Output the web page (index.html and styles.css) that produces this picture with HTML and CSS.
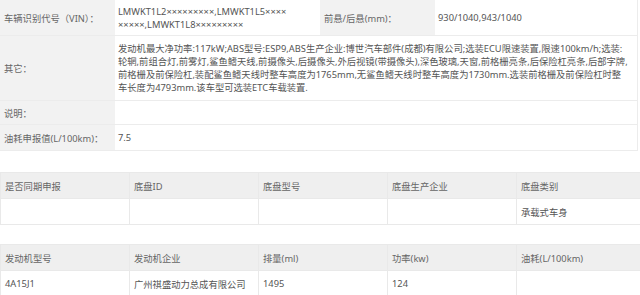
FILE: index.html
```html
<!DOCTYPE html>
<html lang="zh-CN">
<head>
<meta charset="utf-8">
<link rel="stylesheet" href="styles.css">
</head>
<body>
<table class="info">
  <tr class="r-vin">
    <td class="lbl">车辆识别代号（VIN）：</td>
    <td class="val vin">LMWKT1L2×××××××××,LMWKT1L5××××<br>×××××,LMWKT1L8×××××××××</td>
    <td class="lbl">前悬/后悬(mm)：</td>
    <td class="val">930/1040,943/1040</td>
  </tr>
  <tr class="r-other">
    <td class="lbl">其它：</td>
    <td class="val multi" colspan="3">发动机最大净功率:117kW;ABS型号:ESP9,ABS生产企业:博世汽车部件(成都)有限公司;选装ECU限速装置,限速100km/h;选装:<br>轮辋,前组合灯,前雾灯,鲨鱼鳍天线,前摄像头,后摄像头,外后视镜(带摄像头),深色玻璃,天窗,前格栅亮条,后保险杠亮条,后部字牌,<br>前格栅及前保险杠,装配鲨鱼鳍天线时整车高度为1765mm,无鲨鱼鳍天线时整车高度为1730mm.选装前格栅及前保险杠时整<br>车长度为4793mm.该车型可选装ETC车载装置.</td>
  </tr>
  <tr class="r-note">
    <td class="lbl">说明：</td>
    <td class="val" colspan="3"></td>
  </tr>
  <tr class="r-fuel">
    <td class="lbl">油耗申报值(L/100km)：</td>
    <td class="val" colspan="3">7.5</td>
  </tr>
</table>

<table class="grid chassis">
  <tr class="head">
    <td>是否同期申报</td>
    <td>底盘ID</td>
    <td>底盘型号</td>
    <td>底盘生产企业</td>
    <td>底盘类别</td>
  </tr>
  <tr class="body">
    <td></td>
    <td></td>
    <td></td>
    <td></td>
    <td>承载式车身</td>
  </tr>
</table>

<table class="grid engine">
  <tr class="head">
    <td>发动机型号</td>
    <td>发动机企业</td>
    <td>排量(ml)</td>
    <td>功率(kw)</td>
    <td>油耗(L/100km)</td>
  </tr>
  <tr class="body">
    <td>4A15J1</td>
    <td>广州祺盛动力总成有限公司</td>
    <td>1495</td>
    <td>124</td>
    <td></td>
  </tr>
</table>
</body>
</html>
```

FILE: styles.css
```css
html, body {
  margin: 0;
  padding: 0;
  background: #fff;
}
body {
  width: 640px;
  height: 295px;
  overflow: hidden;
  font-family: "Noto Sans", "Noto Sans CJK SC", sans-serif;
  font-size: 9.3px;
  color: #555;
}
table {
  border-collapse: collapse;
  width: 638px;
  table-layout: fixed;
}
td {
  padding: 0 3px;
  vertical-align: middle;
  white-space: nowrap;
  overflow: hidden;
}
.info td {
  border-bottom: 1px solid #ececec;
}
.info .lbl {
  width: 109px;
  background: #f2f2f2;
  color: #666;
  padding-left: 4px;
  padding-right: 2px;
}
.info .val {
  background: #fff;
  color: #555;
}
.info .val:last-child {
  border-right: 1px solid #ececec;
}
.info .vin {
  width: 199px;
  line-height: 13px;
}
.r-vin td { height: 35px; }
.r-other td { height: 64px; }
.multi { line-height: 13px; }
.r-note td { height: 23px; }
.r-fuel td { height: 25px; }

.grid {
  margin-top: 21px;
}
.grid td {
  width: 120px;
  padding: 0 4px;
  border: 1px solid #e9e9e9;
  color: #666;
}
.grid .head td {
  height: 25px;
  background: #efefef;
}
.grid .body td {
  height: 25px;
  background: #fff;
  color: #555;
}
.engine {
  margin-top: 19px;
}
```
